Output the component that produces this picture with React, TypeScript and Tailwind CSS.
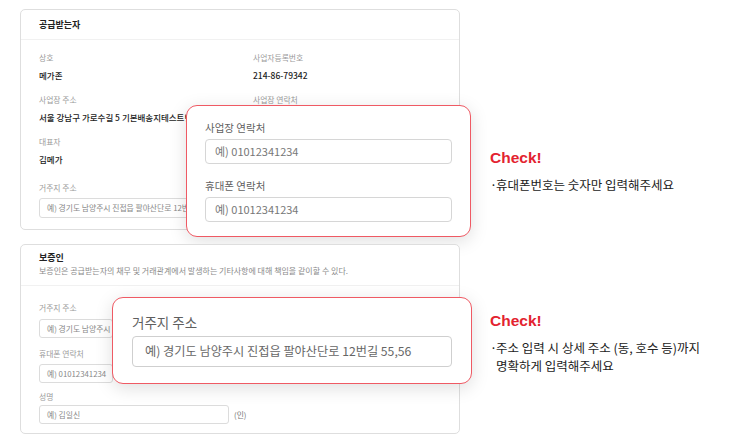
import React from 'react';

const font = { fontFamily: '"Noto Sans CJK KR", "Noto Sans", sans-serif' };

const Field: React.FC<{ label: string; value?: string }> = ({ label, value }) => (
  <div className="flex flex-col">
    <div className="text-[7.8px] leading-[11px] text-[#9a9a9a]">{label}</div>
    {value && <div className="mt-[6px] text-[8.5px] leading-[12px] font-medium text-[#222]">{value}</div>}
  </div>
);

const SmallInput: React.FC<{ placeholder: string; className?: string }> = ({ placeholder, className = '' }) => (
  <div className={`h-[19px] rounded-[3px] border border-[#dcdcdc] bg-white px-[7px] flex items-center text-[7.8px] text-[#888] whitespace-nowrap overflow-hidden ${className}`}>
    {placeholder}
  </div>
);

const Note: React.FC<{ lines: string[] }> = ({ lines }) => (
  <div className="flex flex-col">
    <div className="text-[15.5px] leading-[18px] font-bold text-[#e3232f]" style={{ fontFamily: '"Liberation Sans", Arial, sans-serif' }}>
      Check!
    </div>
    <div className="mt-[9px] flex text-[12.5px] leading-[18px] text-[#222]">
      <span className="w-[6px] shrink-0">·</span>
      <span>
        {lines.map((l, i) => (
          <React.Fragment key={i}>
            {l}
            {i < lines.length - 1 && <br />}
          </React.Fragment>
        ))}
      </span>
    </div>
  </div>
);

export default function App() {
  return (
    <div className="w-[736px] h-[444px] bg-white overflow-hidden pl-[20px] pt-[9px]" style={font}>
      {/* 공급받는자 */}
      <div className="flex items-start">
        <div className="relative w-[440px] h-[221px] rounded-[5px] border border-[#dedede] bg-white">
          <div className="h-[30px] border-b border-[#f1f1f1] pl-[18px] flex items-center text-[9px] font-bold text-[#222]">
            공급받는자
          </div>
          <div className="px-[18px] pt-[12px]">
            <div className="grid grid-cols-[214px_1fr] gap-y-[13px]">
              <Field label="상호" value="메가존" />
              <Field label="사업자등록번호" value="214-86-79342" />
              <div className="whitespace-nowrap">
                <Field label="사업장 주소" value="서울 강남구 가로수길 5 기본배송지테스트변경주소" />
              </div>
              <Field label="사업장 연락처" value="02-1234-5678" />
              <Field label="대표자" value="김메가" />
              <div />
            </div>
            <div className="mt-[17px]">
              <div className="text-[7.8px] leading-[11px] text-[#9a9a9a]">거주지 주소</div>
              <SmallInput className="mt-[5px] h-[20px]" placeholder="예) 경기도 남양주시 진접읍 팔야산단로 12번길 55,56" />
            </div>
          </div>

          <div className="absolute left-[165px] top-[95px] w-[285px] h-[132px] rounded-[11px] border-[1.5px] border-[#ef5a64] bg-white shadow-[0_4px_18px_rgba(0,0,0,0.13)] px-[18px] pt-[15px]">
            <div className="text-[10.5px] leading-[14px] text-[#5f5f5f]">사업장 연락처</div>
            <div className="mt-[4px] h-[25px] rounded-[4px] border border-[#d6d6d6] px-[9px] flex items-center text-[11px] text-[#777]">
              예) 01012341234
            </div>
            <div className="mt-[15px] text-[10.5px] leading-[14px] text-[#5f5f5f]">휴대폰 연락처</div>
            <div className="mt-[4px] h-[25px] rounded-[4px] border border-[#d6d6d6] px-[9px] flex items-center text-[11px] text-[#777]">
              예) 01012341234
            </div>
          </div>
        </div>
        <div className="ml-[30px] pt-[140px]">
          <Note lines={['휴대폰번호는 숫자만 입력해주세요']} />
        </div>
      </div>

      {/* 보증인 */}
      <div className="mt-[14px] flex items-start">
        <div className="relative w-[440px] h-[190px] rounded-[5px] border border-[#dedede] bg-white">
          <div className="border-b border-[#f1f1f1] pl-[18px] pt-[7px] pb-[9px]">
            <div className="text-[9px] leading-[12px] font-bold text-[#222]">보증인</div>
            <div className="mt-[1px] text-[8px] leading-[11px] text-[#8a8a8a]">
              보증인은 공급받는자의 채무 및 거래관계에서 발생하는 기타사항에 대해 책임을 같이할 수 있다.
            </div>
          </div>
          <div className="px-[18px] pt-[16px]">
            <div className="text-[7.8px] leading-[11px] text-[#9a9a9a]">거주지 주소</div>
            <SmallInput className="mt-[6px] w-[74px]" placeholder="예) 경기도 남양주시" />
            <div className="mt-[10px] text-[7.8px] leading-[11px] text-[#9a9a9a]">휴대폰 연락처</div>
            <SmallInput className="mt-[5px] w-[74px]" placeholder="예) 01012341234" />
            <div className="mt-[8px] text-[7.8px] leading-[11px] text-[#9a9a9a]">성명</div>
            <div className="mt-[3px] flex items-center">
              <SmallInput className="w-[190px]" placeholder="예) 김일신" />
              <span className="ml-[5px] text-[7.8px] text-[#777]">(인)</span>
            </div>
          </div>

          <div className="absolute left-[91px] top-[52px] w-[360px] h-[87px] rounded-[11px] border-[1.5px] border-[#ef5a64] bg-white shadow-[0_4px_18px_rgba(0,0,0,0.13)] px-[19px] pt-[16px]">
            <div className="text-[13.5px] leading-[16px] text-[#5f5f5f]">거주지 주소</div>
            <div className="mt-[6px] h-[31px] rounded-[4px] border border-[#cfcfcf] px-[12px] flex items-center text-[12.2px] text-[#666] whitespace-nowrap">
              예) 경기도 남양주시 진접읍 팔야산단로 12번길 55,56
            </div>
          </div>
        </div>
        <div className="ml-[30px] pt-[68px]">
          <Note lines={['주소 입력 시 상세 주소 (동, 호수 등)까지', '명확하게 입력해주세요']} />
        </div>
      </div>
    </div>
  );
}
